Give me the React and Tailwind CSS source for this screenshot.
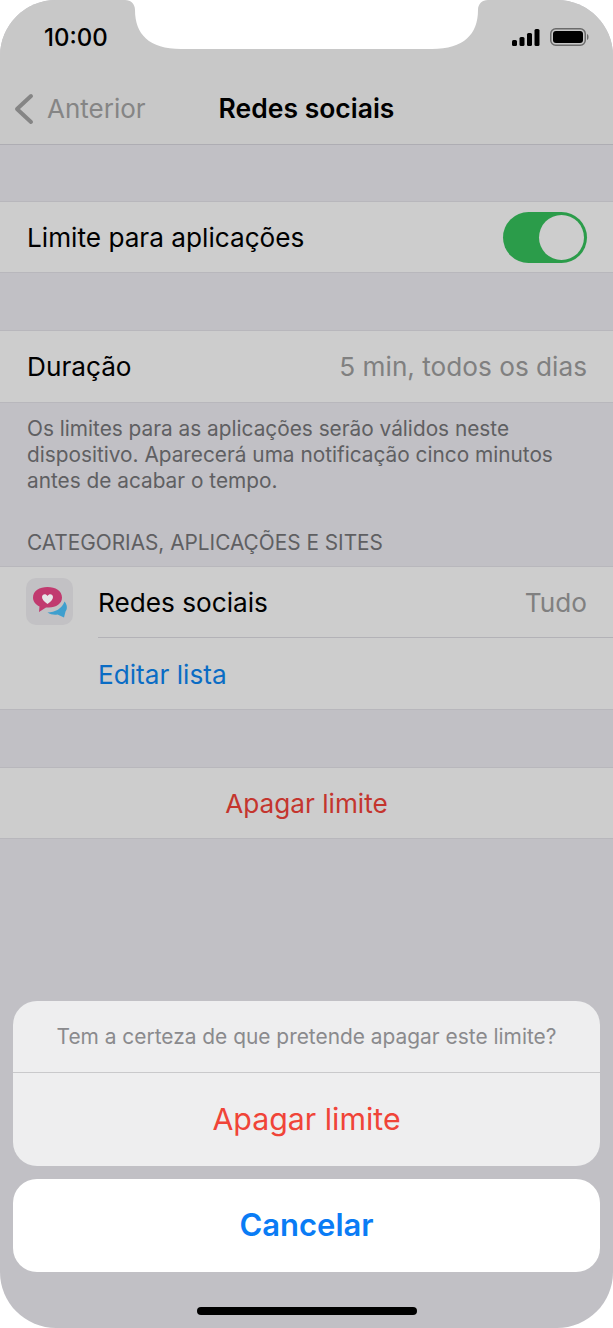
import { useState } from 'react';

function StatusIcons() {
  return (
    <div className="flex items-center gap-[10px]">
      <svg width="28" height="17" viewBox="0 0 28 17" className="block">
        <rect x="0" y="11" width="5" height="6" rx="1.5" fill="#000" />
        <rect x="7.500" y="8" width="5" height="9" rx="1.5" fill="#000" />
        <rect x="15" y="4" width="5" height="13" rx="1.500" fill="#000" />
        <rect x="22.500" y="0" width="5" height="17" rx="1.500" fill="#000" />
      </svg>
      <svg width="39" height="18" viewBox="0 0 39 18" className="block">
        <rect x="0.750" y="0.750" width="34.500" height="16.500" rx="5" fill="none" stroke="#6b6b6b" strokeWidth="1.500" />
        <rect x="3" y="3" width="30" height="12" rx="3" fill="#000" />
        <path d="M37 6 C39 6.500 39 11.500 37 12 Z" fill="#6b6b6b" />
      </svg>
    </div>
  );
}

function SocialIcon() {
  return (
    <div className="w-[47px] h-[47px] rounded-[10px] bg-[#c2c1c4] shrink-0">
      <svg width="47" height="47" viewBox="0 0 47 47" className="block">
        <path d="M38.500 23.500 C41.500 27 41.500 31 39.500 33.500 L38 39.500 L31.500 36.500 C28 37 24.500 36.500 21.500 34.500 C29 34.500 36 30.500 38.500 23.500 Z" fill="#3f9fce" />
        <path d="M21.500 9 C29.500 9 36 13 36 19.500 C36 26 29.500 30 21.500 29.500 L20 29.500 L13 34 L13.500 28.500 C9.500 26.500 7 23.500 7 19.500 C7 13 13.500 9 21.500 9 Z" fill="#c13a6f" />
        <path d="M21.500 26 C17.500 23.300 16 21 16 19 C16 15.800 20 15 21.500 18 C23 15 27 15.800 27 19 C27 21 25.500 23.300 21.500 26 Z" fill="#e6e6e8" />
      </svg>
    </div>
  );
}

export default function App() {
  const [on] = useState(true);

  return (
    <div className="relative w-[613px] h-[1328px] bg-white font-['Inter','Liberation_Sans',sans-serif]">
      <div className="relative w-full h-full rounded-[56px] overflow-hidden bg-[#c1c0c5] flex flex-col">
        {/* notch */}
        <svg width="363" height="50" viewBox="0 0 363 50" className="absolute top-0 left-[125px]">
          <path d="M0 0 C6 0 10 4 10 10 C10 34 24 49 56 49 L307 49 C339 49 353 34 353 10 C353 4 357 0 363 0 Z" fill="#fff" />
        </svg>

        <div className="h-[145px] shrink-0 bg-[#c8c8c8] border-b border-[#aeadb3] flex flex-col">
          <div className="h-[72px] pl-[44px] pr-[24px] pt-[22px] flex items-start justify-between">
            <span className="text-[24px] leading-[32px] font-medium text-black">10:00</span>
            <div className="pt-[6px]"><StatusIcons /></div>
          </div>
          <div className="relative h-[72px] flex items-center justify-center">
            <div className="absolute left-[14px] top-[20px] flex items-center">
              <svg width="20" height="32" viewBox="0 0 20 32" className="block">
                <path d="M17 3 L3 16 L17 29" fill="none" stroke="#858585" strokeWidth="4" strokeLinecap="round" strokeLinejoin="round" />
              </svg>
              <span className="ml-[13px] pt-[1px] text-[26px] leading-[32px] text-[#858585]">Anterior</span>
            </div>
            <span className="text-[26.500px] font-semibold leading-[32px] text-black">Redes sociais</span>
          </div>
        </div>

        <div className="mt-[56px] h-[72px] shrink-0 bg-[#cdcdcd] border-y border-[#b8b7bc] pl-[27px] pr-[26px] flex items-center justify-between">
          <span className="pt-[2px] text-[26.200px] text-black">Limite para aplicações</span>
          <div className={`w-[84px] h-[51px] rounded-full flex items-center justify-end pr-[3px] ${on ? 'bg-[#2b9c4a]' : 'bg-gray-400'}`}>
            <div className="w-[45px] h-[45px] rounded-full bg-[#cdcdcd]" />
          </div>
        </div>

        <div className="mt-[57px] h-[73px] shrink-0 bg-[#cdcdcd] border-y border-[#b8b7bc] pl-[27px] pr-[26px] flex items-center justify-between">
          <span className="pt-[1px] text-[26.200px] text-black">Duração</span>
          <span className="pt-[1px] text-[26.200px] text-[#808080]">5 min, todos os dias</span>
        </div>

        <p className="mt-[13px] px-[27px] text-[20.800px] leading-[26px] text-[#5f5f62]">
          Os limites para as aplicações serão válidos neste dispositivo. Aparecerá uma notificação cinco minutos antes de acabar o tempo.
        </p>

        <p className="mt-[36px] px-[27px] text-[20.800px] leading-[26px] text-[#5f5f62]">CATEGORIAS, APLICAÇÕES E SITES</p>

        <div className="mt-[10px] h-[144px] shrink-0 bg-[#cdcdcd] border-y border-[#b8b7bc] flex">
          <div className="pl-[26px] pt-[11px] pr-[25px]"><SocialIcon /></div>
          <div className="flex-1 flex flex-col">
            <div className="h-[71px] shrink-0 border-b border-[#b3b2b7] pr-[26px] pt-[1px] flex items-center justify-between">
              <span className="text-[26.200px] text-black">Redes sociais</span>
              <span className="text-[26.200px] text-[#808080]">Tudo</span>
            </div>
            <div className="flex-1 pt-[2px] flex items-center">
              <span className="text-[26.200px] text-[#0a6cc4]">Editar lista</span>
            </div>
          </div>
        </div>

        <div className="mt-[57px] h-[72px] shrink-0 bg-[#cdcdcd] border-y border-[#b8b7bc] pt-[2px] flex items-center justify-center">
          <span className="text-[26.200px] text-[#c4352e]">Apagar limite</span>
        </div>

        <div className="mt-auto px-[13px] pb-[56px] flex flex-col gap-[13px]">
          <div className="rounded-[24px] bg-[#eeeeef] flex flex-col">
            <div className="h-[72px] border-b border-[#c9c9cb] flex items-center justify-center">
              <span className="text-[20.900px] text-[#8a8a8d]">Tem a certeza de que pretende apagar este limite?</span>
            </div>
            <div className="h-[93px] flex items-center justify-center">
              <span className="text-[30.300px] text-[#f04438]">Apagar limite</span>
            </div>
          </div>
          <div className="h-[93px] rounded-[24px] bg-white flex items-center justify-center">
            <span className="text-[31px] font-semibold text-[#0a7cf5]">Cancelar</span>
          </div>
        </div>

        <div className="absolute bottom-[13px] left-[197px] w-[220px] h-[8px] rounded-full bg-black" />
      </div>
    </div>
  );
}
